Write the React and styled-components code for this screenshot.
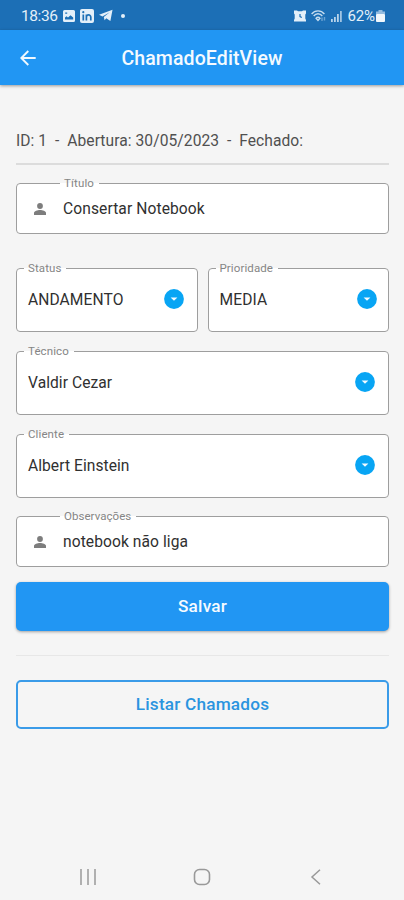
import React from "react";
import styled, { createGlobalStyle } from "styled-components";

const GlobalStyle = createGlobalStyle`
  * { box-sizing: border-box; }
  body { margin: 0; background: #f5f5f5; font-family: Roboto, "Liberation Sans", sans-serif; }
  button, input { font-family: inherit; }
`;

const Screen = styled.div`
  display: flex;
  flex-direction: column;
  width: 404px;
  height: 900px;
  background: #f5f5f5;
  overflow: hidden;
`;

const StatusBar = styled.div`
  display: flex;
  align-items: center;
  justify-content: space-between;
  flex: none;
  height: 30px;
  padding: 1px 19px 0 21px;
  background: #1c6fb6;
  color: #e3eff9;
`;

const StatusGroup = styled.div`
  display: flex;
  align-items: center;
  gap: ${(p) => p.$gap}px;
`;

const StatusText = styled.span`
  font-size: ${(p) => p.$size}px;
  letter-spacing: ${(p) => p.$spacing || 0}px;
  line-height: 18px;
`;

const Dot = styled.span`
  width: 4px;
  height: 4px;
  margin-left: 3px;
  border-radius: 50%;
  background: #e3eff9;
`;

const AppBar = styled.header`
  display: grid;
  grid-template-columns: 56px 1fr 56px;
  align-items: center;
  flex: none;
  height: 55px;
  padding-top: 1px;
  background: #2196f3;
  box-shadow: 0 1px 3px rgba(0, 0, 0, 0.38);
`;

const BackButton = styled.button`
  display: flex;
  justify-content: center;
  padding: 0;
  border: 0;
  background: none;
`;

const Title = styled.h1`
  margin: 0;
  padding-top: 2px;
  color: #f4faff;
  font-size: 19.5px;
  font-weight: 500;
  letter-spacing: 0.12px;
  line-height: 24px;
  text-align: center;
  white-space: nowrap;
`;

const Content = styled.main`
  display: flex;
  flex-direction: column;
  flex: 1;
  padding: 45px 15px 0 16px;
`;

const Meta = styled.p`
  margin: 0;
  color: #505050;
  font-size: 15.6px;
  letter-spacing: 0.06px;
  line-height: 22px;
  white-space: pre;
`;

const Divider = styled.hr`
  width: 100%;
  height: ${(p) => p.$thickness}px;
  margin: ${(p) => p.$margin};
  border: 0;
  background: ${(p) => p.$color};
`;

const Outline = styled.fieldset`
  min-width: 0;
  height: ${(p) => p.$height}px;
  margin: 0;
  padding: 0 ${(p) => p.$end || 11}px 0 ${(p) => p.$start}px;
  border: 1px solid #9e9e9e;
  border-radius: 4px;
  background: #fff;
`;

const Legend = styled.legend`
  height: 13px;
  margin-left: ${(p) => p.$shift}px;
  padding: 0 5px 0 4px;
  color: #858585;
  font-size: 11.5px;
  letter-spacing: ${(p) => p.$spacing}px;
  line-height: 13px;
`;

const FieldBody = styled.div`
  display: flex;
  align-items: center;
  height: ${(p) => p.$height}px;
`;

const Value = styled.span`
  flex: 1;
  color: #303030;
  font-size: 15.6px;
  letter-spacing: ${(p) => p.$spacing}px;
  line-height: 20px;
  white-space: nowrap;
`;

const PersonIcon = styled.svg`
  flex: none;
  margin-right: 17px;
`;

const DropBadge = styled.svg`
  flex: none;
  margin-bottom: 2px;
`;

const Form = styled.form`
  display: flex;
  flex-direction: column;
`;

const FieldRow = styled.div`
  display: grid;
  grid-auto-flow: column;
  grid-auto-columns: minmax(0, 1fr);
  gap: ${(p) => p.$gap || 0}px;
  margin-bottom: ${(p) => p.$below}px;
`;

const Button = styled.button`
  height: 49px;
  padding: 0 0 1px;
  border: ${(p) => (p.$outlined ? "2px solid #3a9be8" : "0")};
  border-radius: 5px;
  background: ${(p) => (p.$outlined ? "#f5f5f5" : "#2196f3")};
  box-shadow: ${(p) => (p.$outlined ? "none" : "0 1px 3px rgba(0, 0, 0, 0.35)")};
  color: ${(p) => (p.$outlined ? "#2a94df" : "#f6fbff")};
  font-size: 17.2px;
  font-weight: 500;
  letter-spacing: ${(p) => p.$spacing}px;
  line-height: 20px;
`;

const NavBar = styled.nav`
  display: flex;
  align-items: center;
  justify-content: space-between;
  flex: none;
  height: 46px;
  padding: 0 79px 0 79px;
`;

function Person() {
  return (
    <PersonIcon width="12" height="12" viewBox="0 0 12 12" fill="#7d7d7d">
      <circle cx="6" cy="3" r="2.9" />
      <path d="M0 12V9.8C0 7.900 3.500 6.900 6 6.900S12 7.900 12 9.800V12Z" />
    </PersonIcon>
  );
}

function DropIcon() {
  return (
    <DropBadge width="20" height="20" viewBox="0 0 20 20">
      <circle cx="10" cy="10" r="9.900" fill="#08a5f4" />
      <path d="M6.600 8.400h6.800L10 11.800Z" fill="#f4fbff" />
    </DropBadge>
  );
}

function TextField({ label, value, height, body, spacing, labelSpacing }) {
  return (
    <Outline $height={height} $start={17}>
      <Legend $shift={26} $spacing={labelSpacing}>{label}</Legend>
      <FieldBody $height={body}>
        <Person />
        <Value $spacing={spacing}>{value}</Value>
      </FieldBody>
    </Outline>
  );
}

function SelectField({ label, value, spacing, labelSpacing, end }) {
  return (
    <Outline $height={70} $start={11} $end={end}>
      <Legend $shift={-4} $spacing={labelSpacing}>{label}</Legend>
      <FieldBody $height={49}>
        <Value $spacing={spacing}>{value}</Value>
        <DropIcon />
      </FieldBody>
    </Outline>
  );
}

export default function App() {
  return (
    <Screen>
      <GlobalStyle />
      <StatusBar>
        <StatusGroup $gap={5}>
          <StatusText $size={15.5} $spacing={-0.4}>18:36</StatusText>
          <svg width="12" height="12" viewBox="0 0 12 12">
            <path fill="#e3eff9" fillRule="evenodd" d="M1.500 0h9A1.500 1.500 0 0 1 12 1.500v9a1.500 1.500 0 0 1-1.500 1.500h-9A1.500 1.500 0 0 1 0 10.500v-9A1.500 1.500 0 0 1 1.500 0ZM2 9.500h8.200V7.500L7.500 5.200 5 7.400 3.500 6.300 2 7.500ZM2.200 2.500v1.300h2V2.500Z" />
          </svg>
          <svg width="14" height="14" viewBox="0 0 14 14">
            <rect width="14" height="14" rx="2" fill="#e3eff9" />
            <path d="M3.300 5.500v6M6.400 5.500v6M6.400 8.200c0-3 4.400-3 4.400 0v3.300" fill="none" stroke="#1c6fb6" strokeWidth="1.700" />
            <circle cx="3.300" cy="3.200" r="1.100" fill="#1c6fb6" />
          </svg>
          <svg width="14" height="13" viewBox="0 0 15 13">
            <path fill="#e3eff9" d="M0 5.800 14.500.3 12.200 12.500 7.800 9.400 6 11.500 5.100 8.200 11.500 3.100 3.700 7.500Z" />
          </svg>
          <Dot />
        </StatusGroup>
        <StatusGroup $gap={5}>
          <svg width="12" height="12" viewBox="0 0 12 12">
            <path d="M0 .5h3l1 .7h4l1-.7h3v3l-.7 1v4l.7 1.500v1.500H9.500L8 11.500H4L2.500 11.500H0V10l.7-1.500v-4L0 3.500Z" fill="#e3eff9" />
            <path d="M6 4v2.600l1.800.9" fill="none" stroke="#1c6fb6" strokeWidth="1.200" />
          </svg>
          <svg width="15" height="12" viewBox="0 0 15 12" fill="none" stroke="#c5dcef" strokeWidth="1.400">
            <path d="M.6 4C4-.2 10-.2 13.400 4M2.700 6C5 3 9 3 11.300 6M5 8.300c1-1.400 3-1.400 4 0L7 10.500Z" />
            <path d="M11 7.500v3.500M13.500 7v3.500" stroke="#6ca3d1" />
          </svg>
          <svg width="11" height="12" viewBox="0 0 11 12">
            <path d="M0 9h1.800v3H0ZM3 7h1.800v5H3ZM6 4h1.800v8H6Z" fill="#b7d3ea" />
            <path d="M9 1h1.800v11H9Z" fill="#a1c5e3" />
          </svg>
          <StatusGroup $gap={1}>
            <StatusText $size={15} $spacing={-0.1}>62%</StatusText>
            <svg width="9" height="12" viewBox="0 0 9 12">
              <path d="M2.500 0h4v1.500H9v3H0v-3h2.500Z" fill="#93bce0" />
              <rect y="4" width="9" height="8" rx="1" fill="#f0f7fc" />
            </svg>
          </StatusGroup>
        </StatusGroup>
      </StatusBar>
      <AppBar>
        <BackButton type="button" aria-label="Voltar">
          <svg width="16" height="16" viewBox="0 0 16 16" fill="none" stroke="#eff8ff" strokeWidth="1.900">
            <path d="M15.700 8H1.500M8.300 1 1.300 8l7 7" />
          </svg>
        </BackButton>
        <Title>ChamadoEditView</Title>
      </AppBar>
      <Content>
        <Meta>{"ID: 1  -  Abertura: 30/05/2023  -  Fechado:"}</Meta>
        <Divider $thickness={2} $color="#dcdcdc" $margin="11px 0 12px" />
        <Form>
          <FieldRow $below={28}>
            <TextField label="Título" value="Consertar Notebook" height={57} body={37} spacing={0.09} labelSpacing={0.15} />
          </FieldRow>
          <FieldRow $gap={10} $below={13}>
            <SelectField label="Status" value="ANDAMENTO" spacing={0.08} labelSpacing={0.1} end={13} />
            <SelectField label="Prioridade" value="MEDIA" spacing={0.08} labelSpacing={0.1} />
          </FieldRow>
          <FieldRow $below={13}>
            <SelectField label="Técnico" value="Valdir Cezar" spacing={0.05} labelSpacing={0.1} end={13} />
          </FieldRow>
          <FieldRow $below={12}>
            <SelectField label="Cliente" value="Albert Einstein" spacing={0.05} labelSpacing={0.1} end={13} />
          </FieldRow>
          <FieldRow $below={15}>
            <TextField label="Observações" value="notebook não liga" height={57} body={37} spacing={0.07} labelSpacing={0.05} />
          </FieldRow>
          <Button type="button" $spacing={0.2}>Salvar</Button>
        </Form>
        <Divider $thickness={1} $color="#e7e7e7" $margin="24px 0 24px" />
        <Button type="button" $outlined $spacing={0.2}>Listar Chamados</Button>
      </Content>
      <NavBar>
        <svg width="18" height="16" viewBox="0 0 18 16" stroke="#999" strokeWidth="1.500">
          <path d="M2 0v16M9 0v16M16 0v16" />
        </svg>
        <svg width="18" height="18" viewBox="0 0 18 18" fill="none" stroke="#999" strokeWidth="1.600">
          <rect x="1.500" y="1.500" width="15" height="15" rx="5" />
        </svg>
        <svg width="18" height="16" viewBox="0 0 18 16" fill="none" stroke="#999" strokeWidth="1.500">
          <path d="m13 .8-8 7.200 8 7.200" />
        </svg>
      </NavBar>
    </Screen>
  );
}
